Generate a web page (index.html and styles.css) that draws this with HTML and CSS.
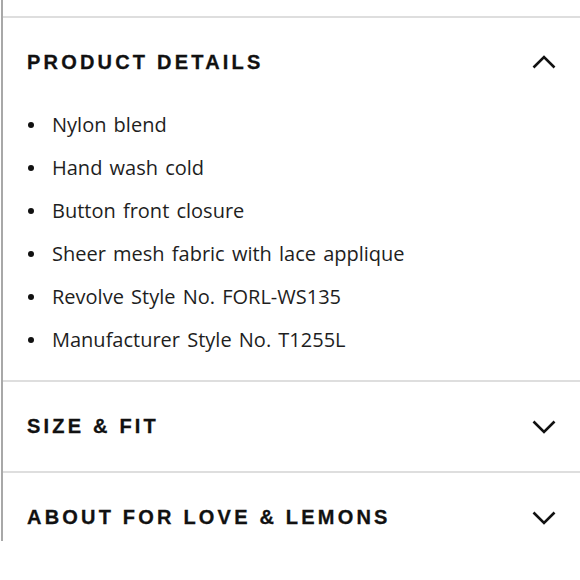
FILE: index.html
```html
<!DOCTYPE html>
<html>
<head>
<meta charset="utf-8">
<link rel="stylesheet" href="styles.css">
</head>
<body>
<div class="panel">
  <div class="lead"></div>
  <section class="section">
    <div class="header header-open">
      <h2 class="title">PRODUCT DETAILS</h2>
      <svg class="chev" width="24" height="14" viewBox="0 0 24 14"><polyline points="1.5,12.5 12,2 22.5,12.5" fill="none" stroke="#111" stroke-width="2.6"/></svg>
    </div>
    <ul class="list">
      <li>Nylon blend</li>
      <li>Hand wash cold</li>
      <li>Button front closure</li>
      <li>Sheer mesh fabric with lace applique</li>
      <li>Revolve Style No. FORL-WS135</li>
      <li>Manufacturer Style No. T1255L</li>
    </ul>
  </section>
  <section class="section">
    <div class="header">
      <h2 class="title">SIZE &amp; FIT</h2>
      <svg class="chev" width="24" height="14" viewBox="0 0 24 14"><polyline points="1.5,1.5 12,12 22.5,1.5" fill="none" stroke="#111" stroke-width="2.6"/></svg>
    </div>
  </section>
  <section class="section">
    <div class="header">
      <h2 class="title">ABOUT FOR LOVE &amp; LEMONS</h2>
      <svg class="chev" width="24" height="14" viewBox="0 0 24 14"><polyline points="1.5,1.5 12,12 22.5,1.5" fill="none" stroke="#111" stroke-width="2.6"/></svg>
    </div>
  </section>
</div>
</body>
</html>
```
FILE: styles.css
```css
html, body {
  margin: 0;
  padding: 0;
  background: #fff;
}
.panel {
  margin-left: 1px;
  border-left: 2px solid #a8a8a8;
  height: 541px;
  overflow: hidden;
}
.lead {
  height: 16px;
}
.section {
  border-top: 2px solid #dedede;
}
.header {
  display: flex;
  align-items: center;
  justify-content: space-between;
  height: 89px;
  padding: 0 24px 0 24px;
}
.header-open {
  height: 88px;
}
.title {
  margin: 0;
  font-family: "Liberation Sans", Arial, sans-serif;
  font-weight: 700;
  font-size: 20px;
  letter-spacing: 3.2px;
  color: #111;
  -webkit-text-stroke: 0.3px #111;
}
.chev {
  display: block;
}
.list {
  margin: -3px 0 0;
  padding: 0 0 19px 25px;
  list-style: none;
  font-family: "Open Sans", "Liberation Sans", sans-serif;
  font-size: 20px;
  word-spacing: 2px;
  color: #1e1e1e;
}
.list li {
  display: flex;
  align-items: center;
  height: 43px;
}
.list li::before {
  content: "";
  width: 6px;
  height: 6px;
  border-radius: 50%;
  background: #111;
  margin-right: 18px;
  flex: none;
}
```
